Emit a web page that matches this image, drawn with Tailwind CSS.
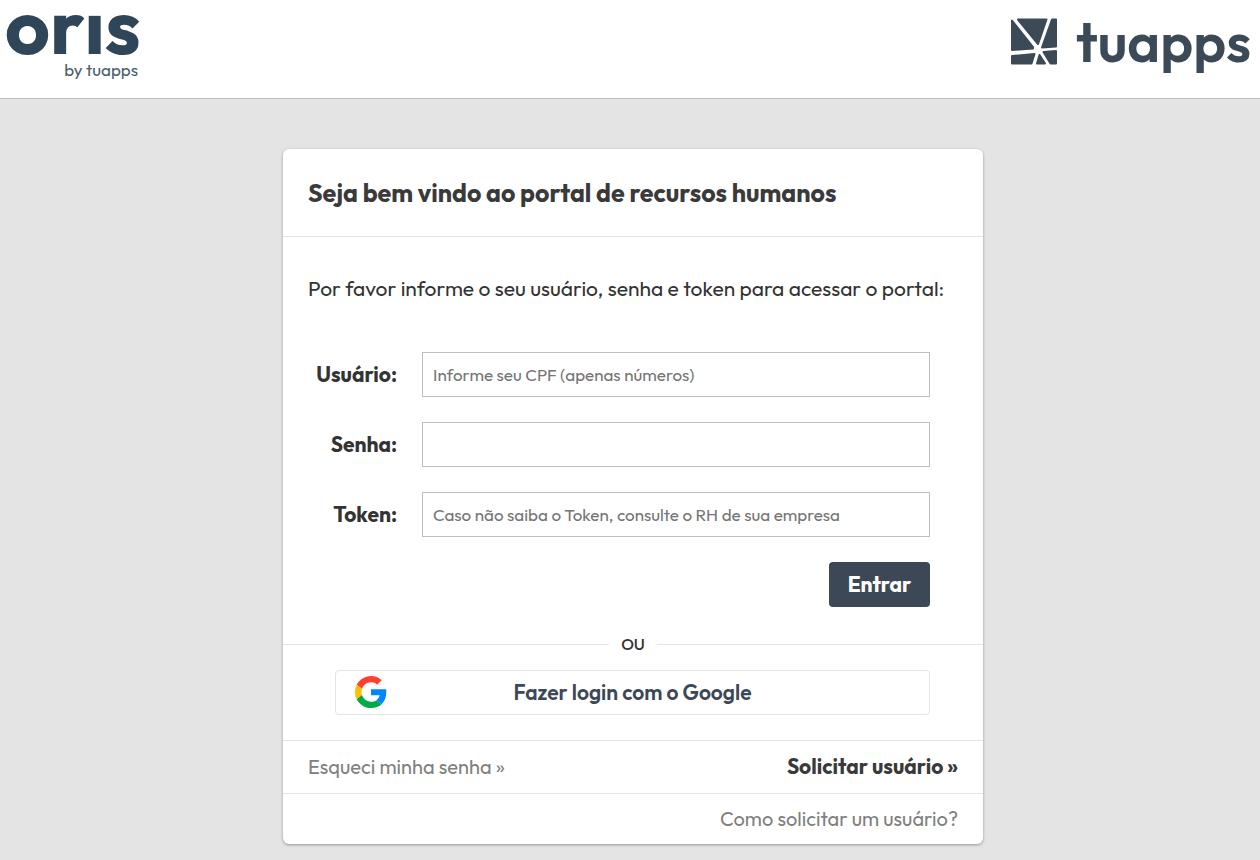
<!DOCTYPE html>
<html lang="pt-BR">
<head>
<meta charset="utf-8">
<meta name="viewport" content="width=device-width, initial-scale=1">
<title>Oris - Portal de recursos humanos</title>
<script src="https://cdn.jsdelivr.net/npm/@tailwindcss/browser@4"></script>
</head>
<body class="min-h-screen bg-[#e4e4e4] font-[Outfit,Lato,sans-serif] text-[#333]">
<header class="flex h-[99px] items-start justify-between border-b border-[#bdbdbd] bg-white px-2">
  <svg class="h-[98px] w-[134px] overflow-visible" viewBox="0 0 134 98" role="img" aria-label="oris by tuapps">
    <text x="-3" y="54" font-family="Outfit,Lato,sans-serif" font-size="78" font-weight="700" fill="#2f4658">orıs</text>
    <text x="130" y="76" text-anchor="end" font-family="Outfit,Lato,sans-serif" font-size="17" fill="#4a5e6d">by tuapps</text>
  </svg>
  <svg class="h-[98px] w-[242px] overflow-visible" viewBox="1010 0 242 98" role="img" aria-label="tuapps">
    <g fill="#3c4a57" stroke="#3c4a57" stroke-width="2" stroke-linejoin="round">
      <path d="M1012 20.500L1033 47L1033 48.500L1012 50Z"/>
      <path d="M1018 19.500H1046.500L1038 44Z"/>
      <path d="M1052 19.500H1056V46.500L1042 47.500Z"/>
      <path d="M1012 56L1034.500 54L1031.500 63.500H1012Z"/>
      <path d="M1039.500 55L1045 63.500H1037Z"/>
      <path d="M1043.500 52L1056 51V63.500H1050.500Z"/>
    </g>
    <text x="1076" y="62" font-family="Outfit,Lato,sans-serif" font-size="56" font-weight="600" fill="#3c4a57">tuapps</text>
  </svg>
</header>
<main class="flex justify-center pt-[50px] pb-4 pl-[6px]">
  <section class="w-full max-w-[700px] rounded-md bg-white shadow-[0_1px_3px_rgba(0,0,0,0.35)]">
    <h1 class="flex h-[88px] items-center border-b border-[#e4e4e4] px-[25px] pt-0.5 text-[25px] font-bold text-[#3a3a3a]">Seja bem vindo ao portal de recursos humanos</h1>
    <form onsubmit="return false">
      <p class="px-[25px] pt-[35px] pb-12 text-[21px] leading-8">Por favor informe o seu usuário, senha e token para acessar o portal:</p>
      <div class="grid grid-cols-[89px_1fr] items-center gap-x-[25px] gap-y-[25px] pr-[53px] pl-[25px]">
        <label for="usuario" class="text-right text-[21px] font-bold">Usuário:</label>
        <input id="usuario" type="text" placeholder="Informe seu CPF (apenas números)" class="h-[45px] w-full border border-[#bdbdbd] px-[10px] text-[17px] placeholder:text-[#757575]">
        <label for="senha" class="text-right text-[21px] font-bold">Senha:</label>
        <input id="senha" type="password" class="h-[45px] w-full border border-[#bdbdbd] px-[10px] text-[17px]">
        <label for="token" class="text-right text-[21px] font-bold">Token:</label>
        <input id="token" type="text" placeholder="Caso não saiba o Token, consulte o RH de sua empresa" class="h-[45px] w-full border border-[#bdbdbd] px-[10px] text-[17px] placeholder:text-[#757575]">
        <button type="submit" class="col-start-2 h-[45px] w-[101px] justify-self-end rounded bg-[#3c4856] text-[21px] font-bold text-white">Entrar</button>
      </div>
      <div class="mt-6 flex h-[26px] items-center gap-3 before:h-px before:flex-1 before:bg-[#e4e4e4] after:h-px after:flex-1 after:bg-[#e4e4e4]">
        <span class="text-[16px] leading-[26px] font-medium">OU</span>
      </div>
      <div class="pt-[13px] pr-[53px] pb-[25px] pl-[52px]">
        <button type="button" class="relative h-[45px] w-full rounded border border-[#e4e4e4] text-[21px] font-semibold text-[#3c4856]">
          <svg class="absolute top-[5px] left-[19px] h-8 w-8" viewBox="0 0 48 48" aria-hidden="true">
            <path fill="#ff4131" d="M24 9.500c3.540 0 6.710 1.220 9.210 3.600l6.850-6.850C35.900 2.380 30.470 0 24 0 14.620 0 6.510 5.380 2.560 13.220l7.980 6.190C12.430 13.720 17.740 9.500 24 9.500z"/>
            <path fill="#0086ff" d="M46.980 24.550c0-1.570-.15-3.090-.38-4.550H24v9.020h12.940c-.58 2.960-2.260 5.480-4.780 7.180l7.730 6c4.510-4.180 7.090-10.360 7.090-17.650z"/>
            <path fill="#ffc000" d="M10.530 28.590c-.48-1.450-.76-2.990-.76-4.590s.27-3.140.76-4.590l-7.980-6.190C.92 16.460 0 20.120 0 24c0 3.880.92 7.540 2.560 10.780l7.970-6.190z"/>
            <path fill="#00aa47" d="M24 48c6.480 0 11.930-2.130 15.890-5.810l-7.730-6c-2.150 1.450-4.920 2.300-8.160 2.300-6.260 0-11.570-4.220-13.470-9.910l-7.980 6.190C6.510 42.620 14.620 48 24 48z"/>
          </svg>
          Fazer login com o Google
        </button>
      </div>
    </form>
    <div class="flex h-[53px] items-center justify-between border-t border-[#e4e4e4] px-[25px]">
      <a href="#" class="text-[20px] text-[#808080]">Esqueci minha senha »</a>
      <a href="#" class="text-[21px] font-bold text-[#3a3a3a]">Solicitar usuário »</a>
    </div>
    <div class="flex h-[51px] items-center justify-end border-t border-[#e4e4e4] px-[25px]">
      <a href="#" class="text-[20px] text-[#808080]">Como solicitar um usuário?</a>
    </div>
  </section>
</main>
</body>
</html>
